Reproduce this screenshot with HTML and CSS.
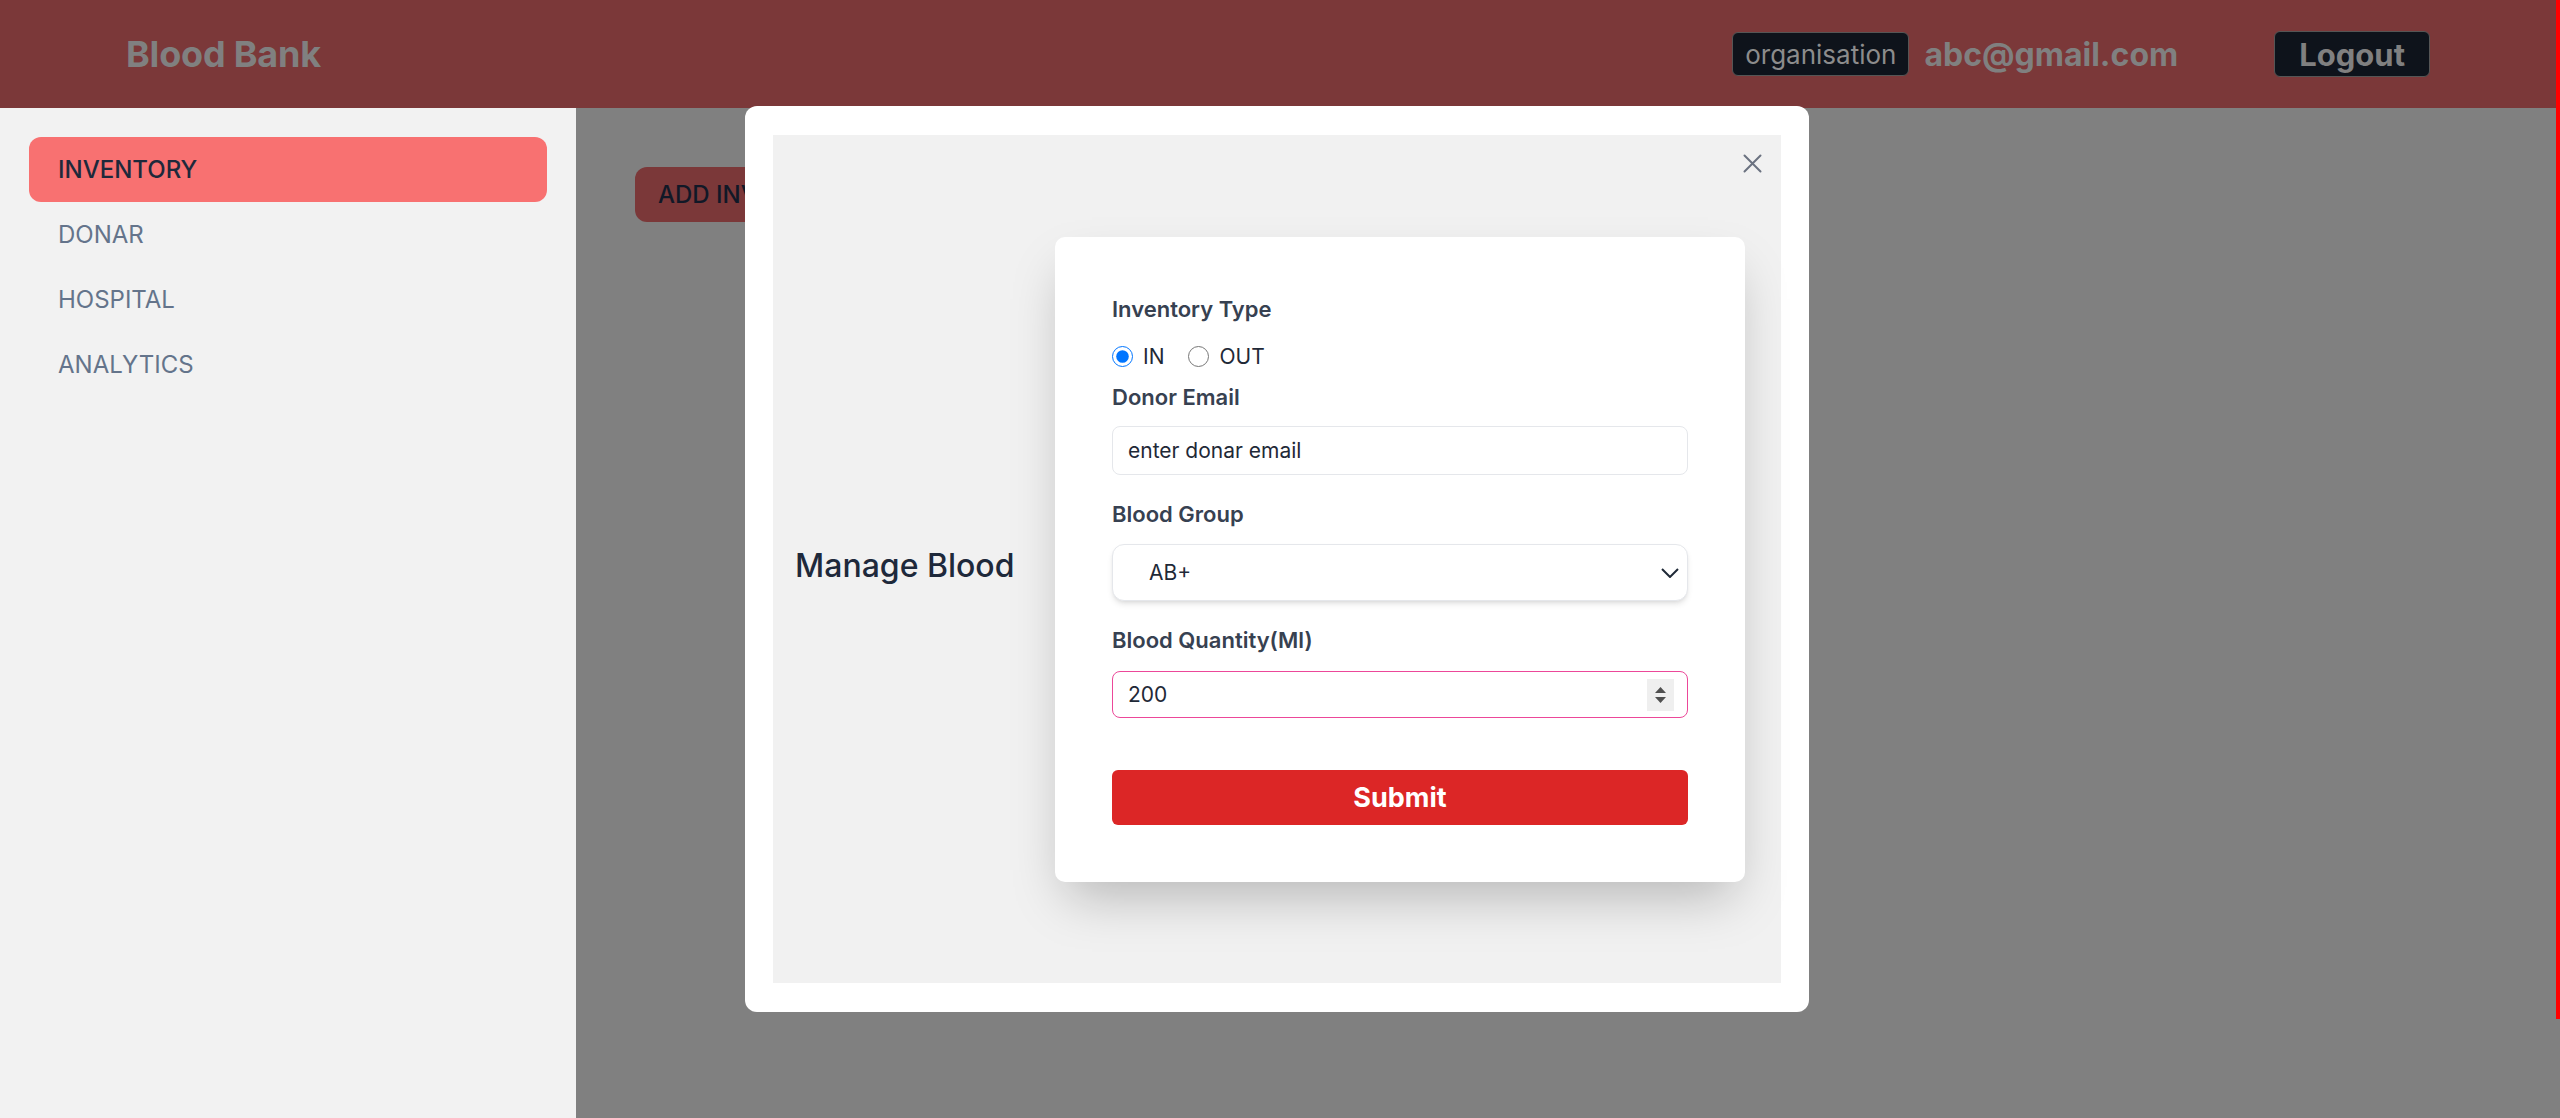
FILE: index.html
```html
<!DOCTYPE html>
<html lang="en">
<head>
<meta charset="utf-8">
<title>Blood Bank</title>
<link rel="stylesheet" href="styles.css">
</head>
<body>
<div class="page">
  <header class="topbar">
    <div class="brand">Blood Bank</div>
    <div class="user-area">
      <span class="role-badge">organisation</span>
      <span class="user-email">abc@gmail.com</span>
      <button class="logout-btn">Logout</button>
    </div>
  </header>
  <div class="layout">
    <aside class="sidebar">
      <div class="nav-item active">INVENTORY</div>
      <div class="nav-item">DONAR</div>
      <div class="nav-item">HOSPITAL</div>
      <div class="nav-item">ANALYTICS</div>
    </aside>
    <main class="content">
      <button class="add-btn">ADD INVENTORY</button>
    </main>
  </div>

  <div class="modal">
    <div class="modal-panel">
      <button class="close-btn" aria-label="Close">
        <svg width="19" height="19" viewBox="0 0 19 19"><path d="M1.5 1.5 L17.5 17.5 M17.5 1.5 L1.5 17.5" stroke="#6b7280" stroke-width="2" fill="none" stroke-linecap="round"/></svg>
      </button>
      <div class="modal-title">Manage Blood</div>
      <form class="form-card">
        <label class="field-label first">Inventory Type</label>
        <div class="radio-row">
          <label class="radio-opt"><input type="radio" name="type" checked> IN</label>
          <label class="radio-opt"><input type="radio" name="type"> OUT</label>
        </div>
        <label class="field-label tight">Donor Email</label>
        <input class="text-input email-input" type="text" value="enter donar email">
        <label class="field-label">Blood Group</label>
        <div class="select-wrap">
          <select class="select-input">
            <option>AB+</option>
          </select>
          <svg class="chevron" width="18" height="10" viewBox="0 0 18 10"><path d="M1 1 L9 9 L17 1" stroke="#1f2937" stroke-width="2" fill="none"/></svg>
        </div>
        <label class="field-label">Blood Quantity(Ml)</label>
        <div class="number-wrap">
          <input class="text-input number-input" type="number" value="200">
          <span class="spinner">
            <svg width="27" height="32" viewBox="0 0 27 32"><path d="M8 14 L13.5 8 L19 14 Z" fill="#505050"/><path d="M8 18 L13.5 24 L19 18 Z" fill="#505050"/></svg>
          </span>
        </div>
        <button type="button" class="submit-btn">Submit</button>
      </form>
    </div>
  </div>

  <div class="edge-line"></div>
</div>
</body>
</html>
```

FILE: styles.css
```css
* { box-sizing: border-box; }

html, body {
  margin: 0;
  padding: 0;
}

body {
  font-family: Inter, "Noto Sans", "Liberation Sans", sans-serif;
  color: #1f2937;
}

.page {
  position: relative;
  width: 2560px;
  height: 1118px;
  overflow: hidden;
  background: #808080;
}

/* Header */
.topbar {
  height: 108px;
  background: #7b3839;
  display: flex;
  align-items: center;
  padding: 0 130px 0 126px;
}

.brand {
  font-size: 36px;
  font-weight: 700;
  color: #808080;
  letter-spacing: -0.2px;
}

.user-area {
  margin-left: auto;
  display: flex;
  align-items: center;
}

.role-badge {
  display: inline-flex;
  align-items: center;
  height: 44px;
  padding: 0 12px;
  background: #0e131b;
  border: 1px solid #555;
  border-radius: 6px;
  color: #8c8c8c;
  font-size: 26px;
  font-weight: 400;
}

.user-email {
  margin-left: 15px;
  font-size: 32px;
  font-weight: 700;
  color: #808080;
}

.logout-btn {
  margin-left: 96px;
  height: 46px;
  padding: 0 24px;
  background: #0e131b;
  border: 1px solid #555;
  border-radius: 6px;
  color: #808080;
  font-family: inherit;
  font-size: 31px;
  font-weight: 700;
  line-height: 1;
}

/* Layout */
.layout {
  display: flex;
  height: 1010px;
}

.sidebar {
  width: 576px;
  background: #f2f2f2;
  padding: 29px 29px 0 29px;
  display: flex;
  flex-direction: column;
}

.nav-item {
  height: 65px;
  display: flex;
  align-items: center;
  padding-left: 29px;
  font-size: 24px;
  color: #64748b;
  border-radius: 12px;
}

.nav-item.active {
  background: #f87171;
  color: #1e293b;
  font-weight: 500;
}

.content {
  flex: 1;
  background: #808080;
  padding: 59px 0 0 59px;
}

.add-btn {
  height: 55px;
  padding: 0 23px;
  background: #7b3839;
  border: none;
  border-radius: 12px;
  color: #111827;
  font-family: inherit;
  font-size: 24px;
  font-weight: 500;
}

/* Modal */
.modal {
  position: absolute;
  left: 745px;
  top: 106px;
  width: 1064px;
  height: 906px;
  background: #ffffff;
  border-radius: 12px;
  padding: 29px 28px;
}

.modal-panel {
  position: relative;
  height: 100%;
  background: #f1f1f1;
  display: flex;
  align-items: center;
  padding-left: 22px;
}

.close-btn {
  position: absolute;
  top: 19px;
  right: 19px;
  width: 19px;
  height: 19px;
  padding: 0;
  border: none;
  background: transparent;
  display: block;
}

.close-btn svg { display: block; }

.modal-title {
  width: 260px;
  flex: none;
  margin-top: 12px;
  font-size: 32px;
  font-weight: 500;
  color: #1e293b;
}

.form-card {
  width: 690px;
  flex: none;
  background: #ffffff;
  border-radius: 10px;
  box-shadow: 0 25px 50px -12px rgba(0, 0, 0, 0.25);
  padding: 58px 57px 57px 57px;
  display: flex;
  flex-direction: column;
}

.field-label {
  display: block;
  font-size: 22px;
  line-height: 28px;
  font-weight: 600;
  color: #374151;
  margin-top: 25px;
}

.field-label.first { margin-top: 0; }
.field-label.tight { margin-top: 12px; }

.radio-row {
  margin-top: 20px;
  height: 28px;
  display: flex;
  align-items: center;
  gap: 24px;
}

.radio-opt {
  display: flex;
  align-items: center;
  gap: 10px;
  font-size: 21px;
  color: #1f2937;
}

.radio-opt input {
  width: 21px;
  height: 21px;
  margin: 0;
  accent-color: #0075ff;
}

.text-input {
  display: block;
  width: 100%;
  font-family: inherit;
  font-size: 21px;
  color: #1f2937;
  background: #fff;
  outline: none;
}

.email-input {
  margin-top: 15px;
  height: 49px;
  padding: 0 15px;
  border: 1px solid #e5e7eb;
  border-radius: 8px;
}

.select-wrap {
  position: relative;
  margin-top: 16px;
}

.select-input {
  display: block;
  width: 100%;
  height: 57px;
  padding: 0 40px 0 36px;
  appearance: none;
  -webkit-appearance: none;
  background: #fff;
  border: 1px solid #e5e7eb;
  border-radius: 12px;
  box-shadow: 0 4px 6px -1px rgba(0,0,0,0.1), 0 2px 4px -2px rgba(0,0,0,0.1);
  font-family: inherit;
  font-size: 21px;
  color: #1f2937;
  outline: none;
}

.chevron {
  position: absolute;
  right: 9px;
  top: 24px;
  pointer-events: none;
}

.number-wrap {
  position: relative;
  margin-top: 17px;
}

.number-input {
  height: 47px;
  padding: 0 15px;
  border: 1px solid #ec4899;
  border-radius: 8px;
  -moz-appearance: textfield;
}

.number-input::-webkit-inner-spin-button,
.number-input::-webkit-outer-spin-button {
  -webkit-appearance: none;
  margin: 0;
}

.spinner {
  position: absolute;
  right: 14px;
  top: 8px;
  width: 27px;
  height: 32px;
  background: #efefef;
}

.spinner svg { display: block; }

.submit-btn {
  margin-top: 52px;
  height: 55px;
  width: 100%;
  background: #dc2626;
  border: none;
  border-radius: 6px;
  color: #ffffff;
  font-family: inherit;
  font-size: 27px;
  font-weight: 700;
}

.edge-line {
  position: absolute;
  right: 0;
  top: 0;
  width: 4px;
  height: 1019px;
  background: #ff0000;
}
```
